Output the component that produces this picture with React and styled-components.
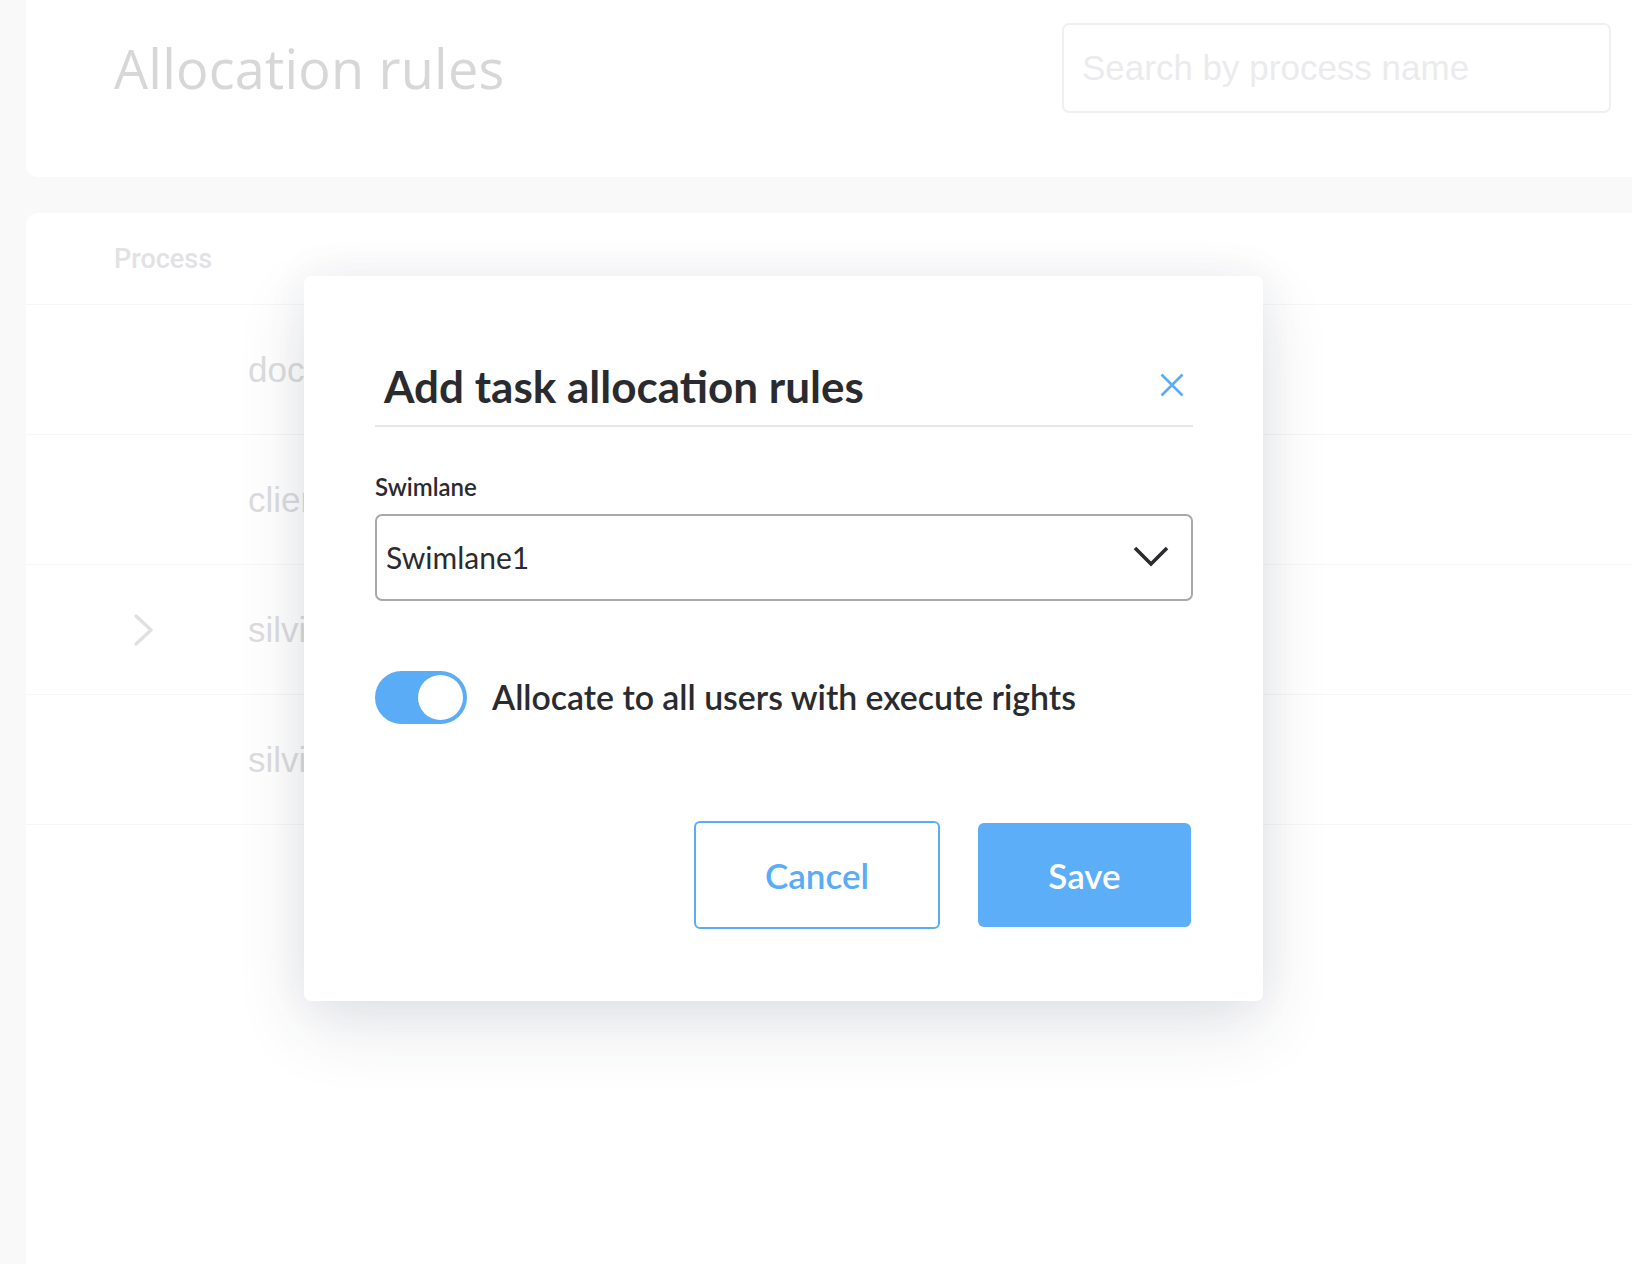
import React from "react";
import styled, { createGlobalStyle } from "styled-components";

const GlobalStyle = createGlobalStyle`
  html, body {
    margin: 0;
    padding: 0;
    background: #f9f9fa;
    font-family: "Liberation Sans", Arial, sans-serif;
  }
  * { box-sizing: border-box; }
`;

const Page = styled.div`
  position: relative;
  width: 1632px;
  height: 1264px;
  overflow: hidden;
  background: #f9f9fa;
  padding-left: 26px;
  display: flex;
  flex-direction: column;
  gap: 36px;
`;

const HeaderCard = styled.header`
  height: 177px;
  background: #ffffff;
  border-radius: 0 0 0 12px;
  display: flex;
  align-items: center;
  justify-content: space-between;
  padding: 0 21px 41px 88px;
`;

const PageTitle = styled.h1`
  margin: 0;
  font-family: "Open Sans", "Noto Sans", sans-serif;
  font-weight: 400;
  font-size: 54px;
  color: #d7d7d8;
  letter-spacing: 0.2px;
`;

const SearchBox = styled.div`
  width: 549px;
  height: 90px;
  border: 2px solid #f0f0f1;
  border-radius: 7px;
  display: flex;
  align-items: center;
  padding-left: 18px;
  font-family: "Liberation Sans", Arial, sans-serif;
  font-size: 35px;
  color: #ebebed;
`;

const TableCard = styled.section`
  flex: 1;
  background: #ffffff;
  border-radius: 12px 0 0 0;
  display: flex;
  flex-direction: column;
`;

const TableHead = styled.div`
  height: 92px;
  display: flex;
  align-items: center;
  padding-left: 88px;
  border-bottom: 1px solid #f6f6f7;
  font-family: Roboto, "Liberation Sans", sans-serif;
  font-weight: 500;
  font-size: 27px;
  color: #e2e2e4;
`;

const Row = styled.div`
  height: 130px;
  display: grid;
  grid-template-columns: 222px 1fr;
  align-items: center;
  border-bottom: 1px solid #f6f6f7;
`;

const ExpandCell = styled.div`
  display: flex;
  justify-content: flex-end;
  padding-right: 93px;
`;

const ProcessName = styled.span`
  font-family: "Liberation Sans", Arial, sans-serif;
  font-size: 35px;
  color: #dcdcde;
`;

const Overlay = styled.div`
  position: absolute;
  inset: 0;
  display: flex;
  align-items: flex-start;
  padding: 276px 0 0 304px;
`;

const Modal = styled.div`
  width: 959px;
  background: #ffffff;
  border-radius: 7px;
  box-shadow: 0 26px 70px rgba(40, 50, 70, 0.12), 0 0 44px rgba(40, 50, 70, 0.06);
  padding: 84px 70px 72px 71px;
  display: flex;
  flex-direction: column;
  font-family: Lato, "Noto Sans", sans-serif;
  color: #2a2b2f;
`;

const ModalHeader = styled.div`
  display: flex;
  align-items: center;
  justify-content: space-between;
  padding: 0 8px 12px 9px;
  border-bottom: 2px solid #e5e6e9;
`;

const ModalTitle = styled.h2`
  margin: 0;
  font-size: 44px;
  font-weight: 700;
  line-height: 1.2;
`;

const CloseButton = styled.button`
  border: none;
  background: none;
  padding: 0;
  width: 26px;
  height: 26px;
  display: flex;
  align-items: center;
  justify-content: center;
  cursor: pointer;
  margin-top: -2px;
`;

const FieldLabel = styled.label`
  margin-top: 46px;
  font-size: 24px;
  font-weight: 600;
  line-height: 1.2;
`;

const Select = styled.div`
  margin-top: 12px;
  height: 87px;
  border: 2px solid #a9a9ab;
  border-radius: 7px;
  display: flex;
  align-items: center;
  justify-content: space-between;
  padding: 0 22px 0 9px;
  font-size: 30px;
  font-weight: 400;
`;

const ToggleRow = styled.div`
  margin-top: 70px;
  display: flex;
  align-items: center;
  gap: 25px;
`;

const Track = styled.div`
  width: 92px;
  height: 53px;
  border-radius: 27px;
  background: #5aacf6;
  padding: 4px;
  display: flex;
  justify-content: ${(p) => (p.$on ? "flex-end" : "flex-start")};
`;

const Knob = styled.div`
  width: 45px;
  height: 45px;
  border-radius: 50%;
  background: #ffffff;
`;

const ToggleLabel = styled.span`
  font-size: 33.8px;
  font-weight: 600;
  line-height: 1.2;
`;

const Actions = styled.div`
  margin-top: 97px;
  display: flex;
  justify-content: flex-end;
  align-items: center;
  gap: 38px;
  padding-right: 2px;
`;

const Button = styled.button`
  font-family: Lato, "Noto Sans", sans-serif;
  font-size: 35px;
  font-weight: 600;
  border-radius: 6px;
  cursor: pointer;
  width: ${(p) => (p.$primary ? "213px" : "246px")};
  height: ${(p) => (p.$primary ? "104px" : "108px")};
  border: ${(p) => (p.$primary ? "none" : "2px solid #5aacf6")};
  background: ${(p) => (p.$primary ? "#5caef8" : "#ffffff")};
  color: ${(p) => (p.$primary ? "#ffffff" : "#5aacf6")};
`;

const rows = [
  { name: "documents_approval", expandable: false },
  { name: "client_onboarding", expandable: false },
  { name: "silvia_process_1", expandable: true },
  { name: "silvia_process_2", expandable: false },
];

const ChevronRight = () => (
  <svg width="22" height="34" viewBox="0 0 22 34" fill="none">
    <path d="M3 3 L18 17 L3 31" stroke="#e0e0e2" strokeWidth="3.4" strokeLinecap="round" strokeLinejoin="round" />
  </svg>
);

const ChevronDown = () => (
  <svg width="36" height="24" viewBox="0 0 36 24" fill="none">
    <path d="M2 3 L18 19 L34 3" stroke="#2a2b2f" strokeWidth="3.6" />
  </svg>
);

const CloseIcon = () => (
  <svg width="24" height="24" viewBox="0 0 24 24" fill="none">
    <path d="M1.5 1.5 L22.5 22.5 M22.5 1.5 L1.5 22.5" stroke="#5aacf6" strokeWidth="2.6" />
  </svg>
);

export default function App() {
  return (
    <>
      <GlobalStyle />
      <Page>
        <HeaderCard>
          <PageTitle>Allocation rules</PageTitle>
          <SearchBox>Search by process name</SearchBox>
        </HeaderCard>
        <TableCard>
          <TableHead>Process</TableHead>
          {rows.map((r) => (
            <Row key={r.name}>
              <ExpandCell>{r.expandable && <ChevronRight />}</ExpandCell>
              <ProcessName>{r.name}</ProcessName>
            </Row>
          ))}
        </TableCard>
        <Overlay>
          <Modal>
            <ModalHeader>
              <ModalTitle>Add task allocation rules</ModalTitle>
              <CloseButton aria-label="Close">
                <CloseIcon />
              </CloseButton>
            </ModalHeader>
            <FieldLabel>Swimlane</FieldLabel>
            <Select>
              <span>Swimlane1</span>
              <ChevronDown />
            </Select>
            <ToggleRow>
              <Track $on>
                <Knob />
              </Track>
              <ToggleLabel>Allocate to all users with execute rights</ToggleLabel>
            </ToggleRow>
            <Actions>
              <Button>Cancel</Button>
              <Button $primary>Save</Button>
            </Actions>
          </Modal>
        </Overlay>
      </Page>
    </>
  );
}
